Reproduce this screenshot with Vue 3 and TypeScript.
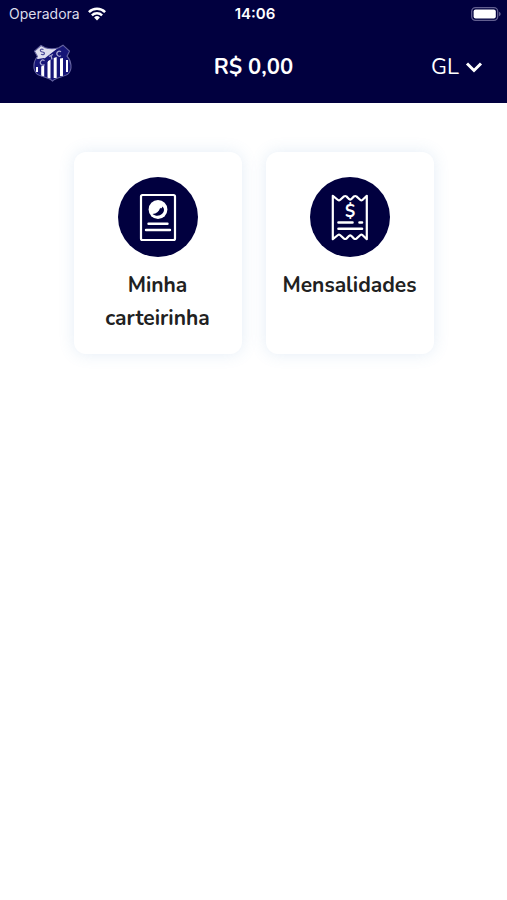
<script setup lang="ts">
interface MenuItem {
  id: 'card' | 'fees'
  label: string
}

const carrier = 'Operadora'
const time = '14:06'
const balance = 'R$ 0,00'
const initials = 'GL'

const items: MenuItem[] = [
  { id: 'card', label: 'Minha carteirinha' },
  { id: 'fees', label: 'Mensalidades' },
]
</script>

<template>
  <div class="app">
    <header class="top">
      <div class="status">
        <div class="carrier">
          <span>{{ carrier }}</span>
          <svg class="wifi" viewBox="0 0 18 14" aria-hidden="true">
            <g fill="none" stroke="#fff" stroke-width="2.5">
              <path d="M0.9 5.2a11.5 11.5 0 0 1 16.2 0" />
              <path d="M3.9 8.4a7.3 7.3 0 0 1 10.2 0" />
            </g>
            <path d="M9 13.4l-2.9-2.9a4.1 4.1 0 0 1 5.8 0z" fill="#fff" />
          </svg>
        </div>
        <span class="time">{{ time }}</span>
        <div class="power">
          <svg class="battery" viewBox="0 0 30 14" aria-hidden="true">
            <rect x="0.7" y="0.7" width="26" height="12.6" rx="3.8" fill="none" stroke="#625f90" stroke-width="1.3" />
            <rect x="2.6" y="2.6" width="22.2" height="8.8" rx="2" fill="#fff" />
            <path d="M28 4.8c2.2 1 2.2 3.4 0 4.400z" fill="#625f90" />
          </svg>
        </div>
      </div>

      <div class="bar">
        <a class="brand" href="#" aria-label="Início">
          <svg class="crest" viewBox="0 0 40 38">
            <defs>
              <clipPath id="shield">
                <path d="M9 1.500l4.200 2.300q6.800 2 13.600 0L31 1.200l6.500 6-2.500 5c4.800 5 5.300 13 1.500 17.300-3 3.500-11.500 3-16 7.500-4.500-4.500-13-4-16-7.500C.7 25.200 1.200 17.200 5.500 12.500L2.500 7.200z" />
              </clipPath>
            </defs>
            <g clip-path="url(#shield)">
              <path d="M0 0h40v38H0z" fill="#161577" />
              <path d="M2 5l7-4 5 3q6 1.500 12 0L8 18l-4-5z" fill="#dedeee" />
              <g fill="#fff">
                <path d="M9.200 22.500l3-1.500v12h-3z" />
                <path d="M15.500 17.500l3-2v19h-3z" />
                <path d="M21.700 14l3-1v21h-3z" />
                <path d="M28 13h3v19h-3z" />
                <path d="M34 16h2v12h-2z" />
                <path d="M4 23h2v5H4z" />
              </g>
              <path d="M3 15.500l9-1.500 4 3.500-6 4-6 1z" fill="#161577" />
              <path d="M27 3l4-2 7 6-4 6.500-6 1-3-4z" fill="#161577" />
              <g fill="none" stroke="#a7a6d0" stroke-width="1.200">
                <path d="M29 7.800a2.500 2.500 0 1 0 0 3.800M12.500 16.700a2.500 2.500 0 1 0 0 3.800" />
                <path d="M11.500 5.500c-4-1.500-4 2.500-1 2.500s2.500 3.800-1.500 2.300" stroke="#4c4b97" />
                <path d="M17 12.500l4-2M19 11.500l1 4" />
              </g>
            </g>
            <path d="M9 1.500l4.200 2.300q6.800 2 13.600 0L31 1.200l6.500 6-2.500 5c4.800 5 5.300 13 1.500 17.300-3 3.500-11.500 3-16 7.500-4.500-4.500-13-4-16-7.500C.7 25.200 1.200 17.200 5.500 12.500L2.500 7.200z" fill="none" stroke="#65639f" stroke-width="1.100" />
          </svg>
        </a>
        <strong class="balance">{{ balance }}</strong>
        <button class="account" type="button" aria-haspopup="menu">
          <span>{{ initials }}</span>
          <svg class="chevron" viewBox="0 0 18 12" aria-hidden="true">
            <path d="M2 2.500l7 7 7-7" fill="none" stroke="#fff" stroke-width="3" />
          </svg>
        </button>
      </div>
    </header>

    <main class="menu">
      <a v-for="item in items" :key="item.id" class="tile" href="#">
        <span class="disc">
          <svg v-if="item.id === 'card'" class="icon" viewBox="0 0 80 80" aria-hidden="true">
            <rect x="23" y="18" width="34" height="45" rx="1.500" fill="none" stroke="#fff" stroke-width="2.200" />
            <circle cx="40" cy="32.500" r="9.400" fill="#fff" />
            <path d="M34.500 37c4-.2 6.300-2.200 7.700-6.200.5 1.200 1.500 1 2.300-1.200 2.200 2.200 2 5-.3 7.200-2.600 2.500-6.500 2.700-9.700.2z" fill="#01003f" />
            <path d="M30.500 46.800h19M28 53h24" stroke="#fff" stroke-width="2.400" stroke-linecap="round" />
          </svg>
          <svg v-else class="icon" viewBox="0 0 80 80" aria-hidden="true">
            <path d="M22.800 18.800l5.200 4.200q1 .8 2 0l4-3.600q1.200-.8 2.400 0l2.800 2.800q1 .8 2 0l2.800-2.800q1.200-.8 2.400 0l4 3.600q1 .8 2 0l4.400-4.200v43.400l-4.400-4.200q-1-.8-2 0l-4 3.600q-1.200.8-2.400 0l-2.800-2.800q-1-.8-2 0l-2.800 2.800q-1.200.8-2.400 0l-4-3.600q-1-.8-2 0l-5.200 4.200z" fill="none" stroke="#fff" stroke-width="2.200" stroke-linejoin="round" />
            <text class="currency" x="40" y="39.500" text-anchor="middle">$</text>
            <path d="M28.500 45.500h14M49.500 45.500h2.500M28.500 51.700h23.500" stroke="#fff" stroke-width="2.600" stroke-linecap="round" />
          </svg>
        </span>
        <span class="label">{{ item.label }}</span>
      </a>
    </main>
  </div>
</template>

<style>
body {
  background: #fff;
}
</style>

<style scoped>
.app {
  min-height: 100vh;
  font-family: Nunito, 'Noto Sans', 'Open Sans', sans-serif;
  color: #212121;
}

.top {
  background: #01003f;
  color: #fff;
}

.status,
.bar {
  display: grid;
  grid-template-columns: 1fr auto 1fr;
  align-items: center;
}

.status {
  height: 28px;
  padding: 0 6px 0 9px;
  font-family: Inter, sans-serif;
  font-size: 15px;
  line-height: 28px;
}

.carrier {
  display: flex;
  align-items: center;
  gap: 8px;
  color: #dcdcea;
  font-size: 14px;
}

.wifi {
  width: 18px;
  height: 14px;
}

.time {
  font-weight: 600;
}

.power {
  display: flex;
  justify-content: flex-end;
}

.battery {
  width: 30px;
  height: 14px;
}

.bar {
  height: 75px;
  padding: 2px 24px 0;
  box-sizing: border-box;
}

.brand {
  justify-self: start;
  margin: 0 8px 8px;
}

.crest {
  display: block;
  width: 40px;
  height: 38px;
}

.balance {
  font-size: 22px;
  font-weight: 700;
}

.account {
  display: flex;
  align-items: center;
  justify-self: end;
  gap: 6px;
  padding: 0;
  border: 0;
  background: none;
  color: inherit;
  font-family: inherit;
  font-size: 22px;
  font-weight: 400;
  cursor: pointer;
}

.chevron {
  width: 18px;
  height: 12px;
}

.menu {
  display: flex;
  flex-wrap: wrap;
  justify-content: center;
  gap: 24px;
  padding: 49px 24px;
}

.tile {
  display: flex;
  flex-direction: column;
  align-items: center;
  gap: 12px;
  box-sizing: border-box;
  width: 168px;
  padding: 25px 16px 19px;
  border-radius: 12px;
  background: #fff;
  box-shadow: 0 0 16px rgba(90, 140, 200, 0.16);
  color: inherit;
  text-align: center;
  text-decoration: none;
}

.disc {
  width: 80px;
  height: 80px;
  border-radius: 50%;
  background: #01003f;
}

.icon {
  display: block;
  width: 80px;
  height: 80px;
}

.currency {
  fill: #fff;
  font-size: 17px;
  font-weight: 700;
}

.label {
  font-size: 21px;
  font-weight: 700;
  line-height: 33px;
}
</style>
